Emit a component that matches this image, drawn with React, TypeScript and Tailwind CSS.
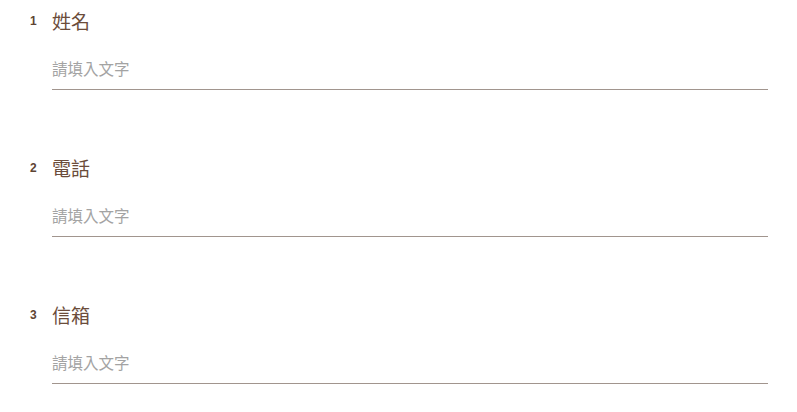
import React from "react";

const fields = [
  { n: 1, label: "姓名" },
  { n: 2, label: "電話" },
  { n: 3, label: "信箱" },
];

export default function App() {
  return (
    <div
      className="w-[797px] h-[412px] bg-white pt-[10px] pl-[30px] pr-[29px] flex flex-col gap-[67px]"
      style={{ fontFamily: '"Liberation Sans", "Noto Sans CJK TC", sans-serif' }}
    >
      {fields.map((f) => (
        <div key={f.n} className="flex">
          <div className="w-[22px] h-6 flex items-center">
            <span className="text-[12px] font-bold text-[#5e4433] leading-none -mt-[2px]">{f.n}</span>
          </div>
          <div className="flex-1 flex flex-col">
            <div className="h-6 flex items-center text-[19px] text-[#6b4c3a] leading-none">{f.label}</div>
            <input
              type="text"
              placeholder="請填入文字"
              className="mt-4 h-10 w-full border-b border-[#a1958e] bg-transparent text-[15.5px] text-[#333] placeholder:text-[#a3a3a3] outline-none"
            />
          </div>
        </div>
      ))}
    </div>
  );
}
